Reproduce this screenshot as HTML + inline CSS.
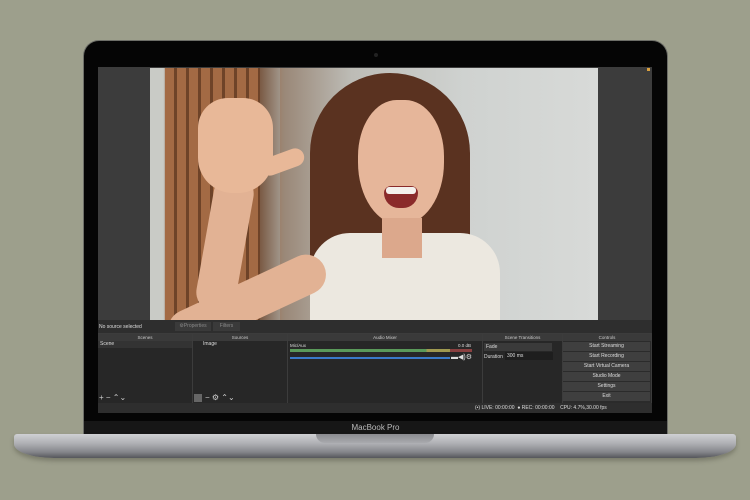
<!DOCTYPE html>
<html><head><style>
*{margin:0;padding:0;box-sizing:border-box}
body{width:750px;height:500px;background:#9d9f8c;position:relative;overflow:hidden;font-family:"Liberation Sans",sans-serif}
.abs{position:absolute}
.lid{left:83px;top:40px;width:585px;height:396px;background:#050505;border-radius:16px 16px 0 0;border:1px solid #6d6e68;border-bottom:none}
.screen{left:98px;top:67px;width:554px;height:346px;background:#3c3c3c}
.photo{left:150px;top:68px;width:448px;height:252px;overflow:hidden;background:linear-gradient(90deg,#c9cbc6 0,#c9cbc6 3%,#8a5a3a 4%,#a06a45 25%,#9a8878 30%,#bdbcb6 45%,#cfd2d0 70%,#d8dad8 100%)}
.t{color:#ddd;font-size:5px;white-space:nowrap}
.dock{top:334px;height:69px;background:#272727;border-right:1px solid #3c3c3c}
.dh{height:7px;background:#3a3a3a;color:#ccc;font-size:4.5px;text-align:center;line-height:7px}
.btn{left:563px;width:87px;height:9px;background:#3f3f3f;color:#ddd;font-size:5px;text-align:center;line-height:9px}
</style></head><body>
<div class="abs lid"></div>
<div class="abs" style="left:374px;top:53px;width:4px;height:4px;border-radius:50%;background:#222"></div>
<div class="abs screen"></div>
<div class="abs" style="left:647px;top:68px;width:3px;height:3px;background:#d9a040"></div>
<div class="abs photo">
 <div class="abs" style="left:15px;top:0;width:100px;height:252px;background:repeating-linear-gradient(90deg,#a36a44 0 9px,#6e4328 9px 12px)"></div>
 <div class="abs" style="left:110px;top:0;width:20px;height:252px;background:linear-gradient(90deg,#7a5a44,#a09488)"></div>
 <div class="abs" style="left:160px;top:5px;width:160px;height:250px;border-radius:80px 80px 30px 30px;background:#5a3220"></div>
 <div class="abs" style="left:160px;top:165px;width:190px;height:100px;border-radius:40px 40px 0 0;background:#ece8e0"></div>
 <div class="abs" style="left:208px;top:32px;width:86px;height:125px;border-radius:45% 45% 50% 50%;background:#e6b69a"></div>
 <div class="abs" style="left:234px;top:118px;width:34px;height:22px;border-radius:8px 8px 17px 17px;background:#8a2a2a"></div>
 <div class="abs" style="left:236px;top:119px;width:30px;height:7px;border-radius:3px;background:#f4f0ec"></div>
 <div class="abs" style="left:232px;top:150px;width:40px;height:40px;background:#dca88c"></div>
 <div class="abs" style="width:170px;height:40px;transform:rotate(-25deg);transform-origin:left;background:#e2b294;border-radius:20px;left:20px;top:250px"></div>
 <div class="abs" style="left:55px;top:105px;width:40px;height:140px;background:#e2b294;border-radius:20px;transform:rotate(10deg)"></div>
 <div class="abs" style="left:48px;top:30px;width:75px;height:95px;border-radius:30px 30px 35px 35px;background:#e8b898"></div>
 <div class="abs" style="left:110px;top:85px;width:45px;height:18px;border-radius:9px;background:#e8b898;transform:rotate(-20deg)"></div>
</div>
<div class="abs" style="left:98px;top:320px;width:554px;height:13px;background:#2e2e2e"></div>
<div class="abs t" style="left:99px;top:324px">No source selected</div>
<div class="abs" style="left:175px;top:322px;width:36px;height:9px;background:#3a3a3a;color:#888;font-size:5px;line-height:9px;text-align:center">⚙Properties</div>
<div class="abs" style="left:213px;top:322px;width:27px;height:9px;background:#3a3a3a;color:#888;font-size:5px;line-height:9px;text-align:center">Filters</div>
<div class="abs dock" style="left:98px;width:95px"><div class="dh">Scenes</div><div style="background:#333;height:7px;color:#ddd;font-size:5px;padding-left:2px;line-height:7px">Scene</div>
<div class="abs t" style="left:1px;top:59px;font-size:8px;color:#ccc">+ − ⌃⌄</div></div>
<div class="abs dock" style="left:193px;width:95px"><div class="dh">Sources</div><div style="height:7px;color:#ddd;font-size:5px;padding-left:10px;line-height:7px">Image</div>
<div class="abs" style="left:1px;top:60px;width:8px;height:8px;background:#666"></div>
<div class="abs t" style="left:12px;top:59px;font-size:8px;color:#ccc">− ⚙ ⌃⌄</div></div>
<div class="abs dock" style="left:288px;width:195px"><div class="dh">Audio Mixer</div>
<div class="abs t" style="left:2px;top:9px;font-size:4.5px">Mic/Aux</div><div class="abs t" style="left:170px;top:9px;font-size:4.5px">0.0 dB</div>
<div class="abs" style="left:2px;top:15px;width:182px;height:3px;background:linear-gradient(90deg,#5a9a5a 0,#5a9a5a 75%,#a09a50 75%,#a09a50 88%,#8a4040 88%)"></div>
<div class="abs" style="left:2px;top:23px;width:160px;height:2px;background:#3a7ac8"></div>
<div class="abs t" style="left:163px;top:19px;font-size:7px">▬◀)⚙</div></div>
<div class="abs dock" style="left:483px;width:80px"><div class="dh">Scene Transitions</div>
<div class="abs" style="left:1px;top:9px;width:68px;height:8px;background:#3a3a3a;color:#ddd;font-size:5px;line-height:8px;padding-left:2px">Fade</div>
<div class="abs t" style="left:1px;top:20px">Duration</div>
<div class="abs" style="left:22px;top:18px;width:48px;height:8px;background:#1e1e1e;color:#ddd;font-size:5px;line-height:8px;padding-left:2px">300 ms</div></div>
<div class="abs dock" style="left:563px;width:89px;background:#2b2b2b"><div class="dh">Controls</div></div>
<div class="abs btn" style="top:342px">Start Streaming</div>
<div class="abs btn" style="top:352px">Start Recording</div>
<div class="abs btn" style="top:362px">Start Virtual Camera</div>
<div class="abs btn" style="top:372px">Studio Mode</div>
<div class="abs btn" style="top:382px">Settings</div>
<div class="abs btn" style="top:392px">Exit</div>
<div class="abs" style="left:98px;top:403px;width:554px;height:10px;background:#2e2e2e"></div>
<div class="abs t" style="left:475px;top:405px">(•) LIVE: 00:00:00 &nbsp;● REC: 00:00:00 &nbsp;&nbsp; CPU: 4.7%,30.00 fps</div>
<div class="abs" style="left:98px;top:413px;width:554px;height:8px;background:#050505"></div>
<div class="abs" style="left:84px;top:421px;width:583px;height:13px;background:#161616;color:#bbb;font-size:8px;text-align:center;line-height:13px">MacBook Pro</div>
<div class="abs" style="left:14px;top:434px;width:722px;height:24px;border-radius:3px 3px 40px 40px/3px 3px 14px 14px;background:linear-gradient(#cfd0d3 0,#aeafb3 40%,#85868b 75%,#55565b 100%);box-shadow:0 3px 4px rgba(60,60,50,.35)"></div>
<div class="abs" style="left:316px;top:434px;width:118px;height:9px;border-radius:0 0 10px 10px;background:linear-gradient(#8a8b8f,#a9aaae)"></div>
</body></html>
